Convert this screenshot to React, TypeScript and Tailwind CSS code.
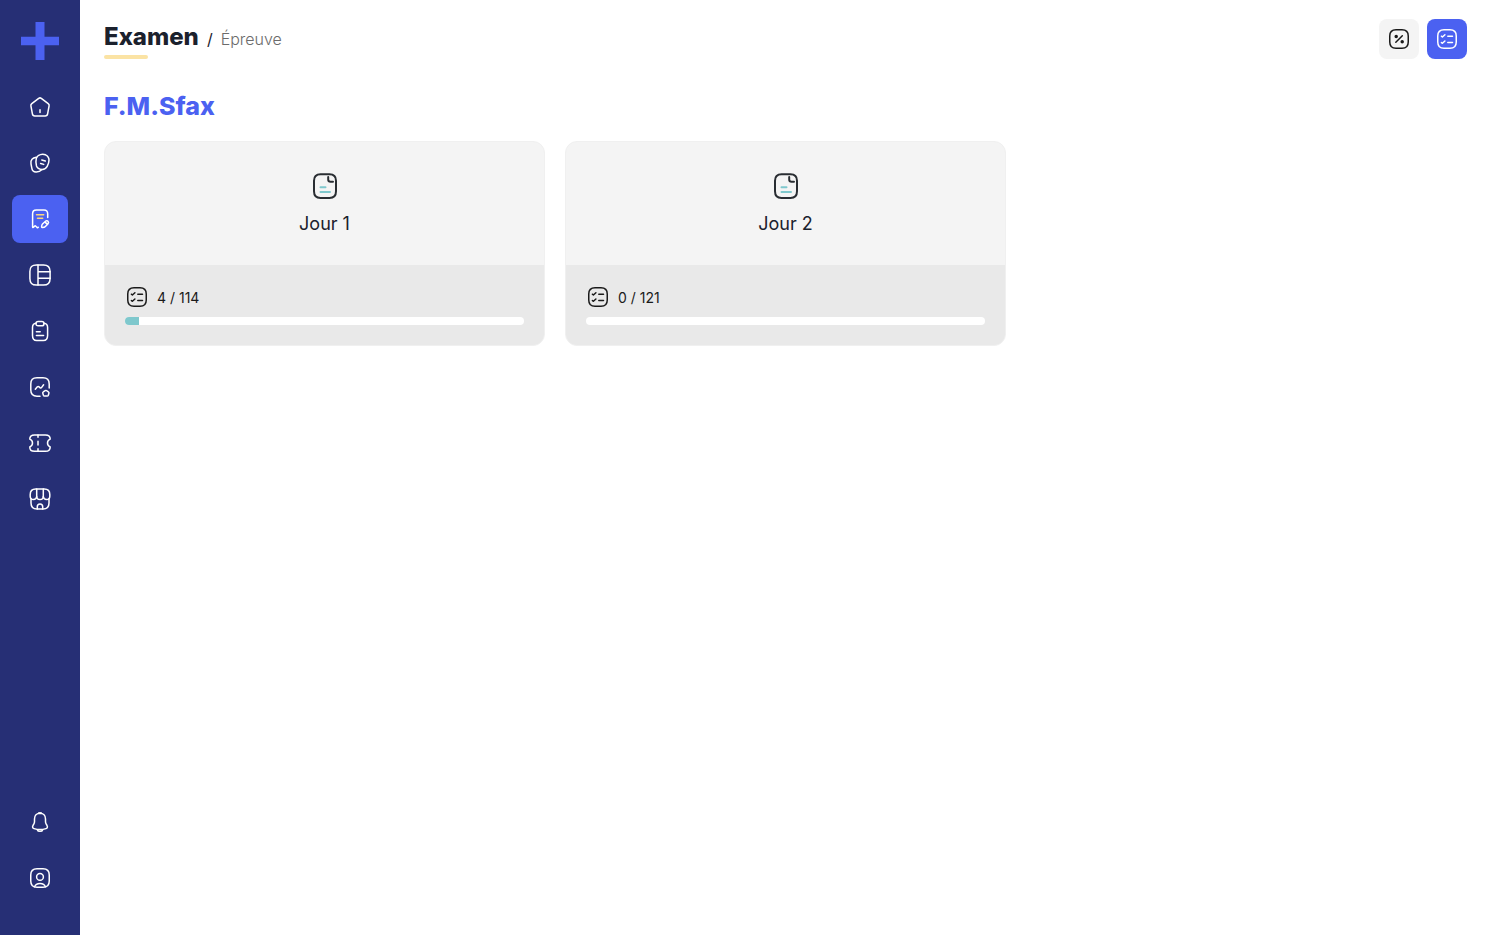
import { useState } from "react";
import type { ReactNode } from "react";

interface IconProps {
  children: ReactNode;
  className?: string;
}

interface NavItem {
  label: string;
  icon: ReactNode;
}

interface Exam {
  name: string;
  done: number;
  total: number;
}

const Icon = ({ children, className = "size-6" }: IconProps) => (
  <svg
    viewBox="0 0 24 24"
    fill="none"
    stroke="currentColor"
    strokeWidth="1.5"
    strokeLinecap="round"
    strokeLinejoin="round"
    className={className}
    aria-hidden="true"
  >
    {children}
  </svg>
);

const ChecklistIcon = () => (
  <Icon>
    <path d="M9 2.750h6c4.400 0 6.250 1.850 6.250 6.250v6c0 4.400-1.850 6.250-6.250 6.250H9c-4.400 0-6.250-1.850-6.250-6.250V9C2.750 4.600 4.600 2.750 9 2.750Z" />
    <path d="m6.400 9.200 1 .8L9.900 7.700M6.400 15.500l1 .8 2.500-2.300M12.800 9.300h4.700M12.800 15.500h4.700" />
  </Icon>
);

const PercentIcon = () => (
  <Icon>
    <path d="M9 2.750h6c4.400 0 6.250 1.850 6.250 6.250v6c0 4.400-1.850 6.250-6.250 6.250H9c-4.400 0-6.250-1.850-6.250-6.250V9C2.750 4.600 4.600 2.750 9 2.750Z" />
    <path d="M8.800 15.300 15.300 8.800" />
    <circle cx="9.200" cy="9.400" r="1" fill="currentColor" />
    <circle cx="15.200" cy="14.700" r="1" fill="currentColor" />
  </Icon>
);

const DocumentIcon = () => (
  <svg
    viewBox="0 0 32 32"
    fill="none"
    strokeWidth="2"
    strokeLinecap="round"
    className="size-8 text-[#292d32]"
    aria-hidden="true"
  >
    <path
      stroke="currentColor"
      d="M11.500 4.200h9c4.800 0 6.500 2.200 6.500 6.500v10.600c0 4.600-1.700 6.700-6.500 6.700h-9C6.700 28 5 25.900 5 21.300V10.700c0-4.300 1.700-6.500 6.500-6.500Z"
    />
    <path stroke="currentColor" d="M19.200 7v2.500c0 1.400 1.100 2.300 2.400 2.300h2.400" />
    <path stroke="#7fc8cd" d="M11.500 17.200h5M11.500 22h9.500" />
  </svg>
);

const navItems: NavItem[] = [
  {
    label: "Accueil",
    icon: (
      <Icon>
        <path d="M10.700 3.300 3.800 8.600c-.8.6-1.100 1.300-.9 2.300l1.500 8c.2 1.400 1 2.100 2.400 2.100h10.400c1.400 0 2.200-.7 2.400-2.100l1.500-8c.2-1-.1-1.700-.9-2.300l-6.900-5.300c-.9-.6-1.700-.6-2.600 0Z" />
        <path d="M12 14.800v2.600" />
      </Icon>
    ),
  },
  {
    label: "Cours",
    icon: (
      <Icon>
        <path d="M12.300 3.600c1.700-.6 3.500-.6 5.200.2 2.200 1.100 3.500 2.400 3.500 5.200 0 2-.7 4.500-1.800 6.400-1.200 2.100-2.800 3.300-5.300 3.100-2.600-.2-4.500-.8-5.400-3.500C7.900 12.900 7.700 10 8.300 7.400c.5-2 1.800-3.100 4-3.800Z" />
        <path d="M8.200 6.300c-1.600.3-3 .7-4.200 1.900-1.200 1.300-1.300 2.900-1 4.600l.8 4.300c.4 2.500 1.700 3.800 4.200 4 2.400.1 4.300-.7 6-2.500M13.800 9l3.500 1M12.600 12.500l3.100.9" />
      </Icon>
    ),
  },
  {
    label: "Examen",
    icon: (
      <Icon>
        <path d="M19.700 10.500V6.700c0-2.500-1.200-3.700-3.700-3.700H8.300C5.800 3 4.600 4.200 4.600 6.700v13.200c0 .6.500.8.900.4l1-1.100c.4-.4.900-.4 1.300 0l1.100 1.100c.5.400 1 .4 1.400 0" />
        <path d="m17.500 14.200-3 2.800c-.6.600-.8 1.600-.9 2.700 0 .6.300.9.900.9 1.100-.1 2-.2 2.600-.8l2.800-2.900c1.700-1.700-.7-4.300-2.400-2.700ZM16.900 14.900l2.200 2.200" />
        <path stroke="#fbd77c" d="M8.500 7.700h7.200M9.500 11.200h5.200" />
      </Icon>
    ),
  },
  {
    label: "Tableau",
    icon: (
      <Icon>
        <path d="M8.500 1.900h7c4.700 0 6.600 1.900 6.600 6.600v7c0 4.700-1.900 6.600-6.600 6.600h-7c-4.700 0-6.600-1.900-6.600-6.600v-7c0-4.700 1.900-6.600 6.600-6.600Z" />
        <path d="M10 2v20M10 8.700h12M10 15.300h12" />
      </Icon>
    ),
  },
  {
    label: "Fiches",
    icon: (
      <Icon>
        <path d="M16 4.300c2.500.2 3.600 1.300 3.600 4.200v8c0 3.300-.9 5-4.300 5H8.700c-3.400 0-4.200-1.700-4.200-5v-8c0-2.900 1.100-4 3.500-4.200" />
        <path d="M10.200 2.600h3.600c1.500 0 2.200.7 2.200 2.100s-.7 2.100-2.200 2.100h-3.600C8.700 6.800 8 6.100 8 4.700s.7-2.100 2.200-2.100ZM8.400 12.700h3.800M8.400 16.400h7.200" />
      </Icon>
    ),
  },
  {
    label: "Statistiques",
    icon: (
      <Icon>
        <path d="M21.200 13V9c0-4.500-1.800-6.200-6.200-6.200H9C4.600 2.800 2.800 4.500 2.800 9v6c0 4.500 1.800 6.200 6.200 6.200h3" />
        <path d="m7.300 14.300 2.100-2.500c.4-.4.900-.5 1.300-.2l1.500 1.200c.4.3 1 .2 1.300-.2l2.100-2.800" />
        <path d="m17.100 15.700-1.800 1.200c-.5.300-.7.700-.5 1.300l.6 2c.2.600.5.900 1.100.9h2.700c.6 0 .9-.3 1.100-.9l.6-2c.2-.6 0-1-.5-1.300l-1.800-1.200c-.5-.4-1-.4-1.500 0Z" />
      </Icon>
    ),
  },
  {
    label: "Abonnement",
    icon: (
      <Icon>
        <path d="M6.500 4h11c3.300 0 4.700 1 4.700 4.100-1.700.7-2.700 2.200-2.700 3.900s1 3.200 2.700 3.900c0 3.300-1.400 4.400-4.700 4.400h-11c-3.300 0-4.700-1.100-4.700-4.400C3.500 15.200 4.500 13.700 4.500 12s-1-3.200-2.700-3.900C1.800 5 3.200 4 6.500 4Z" />
        <path d="M10 4v2.200M10 10.300v3.600M10 17.800V20" />
      </Icon>
    ),
  },
  {
    label: "Boutique",
    icon: (
      <Icon>
        <path d="M3 11.800V16c0 4.200 1.800 6 6 6h6c4.200 0 6-1.800 6-6v-4.200" />
        <path d="M8.700 2v7.300c0 2 1.300 3.300 3.300 3.300s3.300-1.300 3.300-3.300V2" />
        <path d="M8.700 9.500c-.2 1.900-1.500 3.100-3.300 3.100-2 0-3.200-1.300-3.200-3.300V7.500C2.200 3.700 3.900 2 7.700 2h8.600c3.800 0 5.500 1.700 5.500 5.500v1.800c0 2-1.200 3.300-3.200 3.300-1.800 0-3.100-1.200-3.300-3.100" />
        <path d="M9.300 22v-2.200c0-1.900.8-2.800 2.700-2.800s2.700.9 2.700 2.800V22" />
      </Icon>
    ),
  },
];

const footerItems: NavItem[] = [
  {
    label: "Notifications",
    icon: (
      <Icon>
        <path d="M12 3.300c-3.300 0-5.500 2.300-5.500 5.600v2.700c0 .7-.2 1.500-.5 2.100l-1.100 2c-.7 1.200-.2 2.500 1.100 2.900 3.900 1.300 8.100 1.300 12 0 1.300-.4 1.800-1.700 1.100-2.900l-1.100-2c-.3-.6-.5-1.400-.5-2.100V8.900c0-3.300-2.200-5.600-5.500-5.600Z" />
        <path d="M10.700 2.900c.9-.3 1.700-.3 2.600 0M9.300 19.700c.6 2.200 4.800 2.200 5.400 0" />
      </Icon>
    ),
  },
  {
    label: "Profil",
    icon: (
      <Icon>
        <path d="M9 2.750h6c4.400 0 6.250 1.850 6.250 6.250v6c0 4.400-1.850 6.250-6.250 6.250H9c-4.400 0-6.250-1.850-6.250-6.250V9C2.750 4.600 4.600 2.750 9 2.750Z" />
        <circle cx="12" cy="10.900" r="3.400" />
        <path d="M6.600 20.800c.7-2.200 2.800-3.400 5.400-3.400s4.700 1.200 5.400 3.400" />
      </Icon>
    ),
  },
];

const exams: Exam[] = [
  { name: "Jour 1", done: 4, total: 114 },
  { name: "Jour 2", done: 0, total: 121 },
];

const NavLink = ({ item, active }: { item: NavItem; active?: boolean }) => (
  <a
    href="#"
    aria-label={item.label}
    className={`flex h-12 w-14 items-center justify-center rounded-lg text-white ${
      active ? "bg-[#4b61f1]" : ""
    }`}
  >
    {item.icon}
  </a>
);

const ExamCard = ({ exam }: { exam: Exam }) => (
  <a
    href="#"
    className="block overflow-hidden rounded-xl border border-[#f0f0f0] bg-[#f4f4f4]"
  >
    <div className="flex flex-col items-center gap-2 py-7">
      <DocumentIcon />
      <h3 className="text-[18px] leading-[27px] text-[#1b212d]">{exam.name}</h3>
    </div>
    <div className="flex flex-col gap-2 bg-[#e9e9e9] p-5">
      <div className="flex items-center gap-2 text-[#1a1a1a]">
        <ChecklistIcon />
        <span className="text-sm leading-[21px]">
          {exam.done} / {exam.total}
        </span>
      </div>
      <div className="h-2 overflow-hidden rounded-full bg-white">
        <div
          className="h-full bg-[#7fc8cd]"
          style={{ width: `${(exam.done / exam.total) * 100}%` }}
        ></div>
      </div>
    </div>
  </a>
);

export default function App() {
  const [mode, setMode] = useState("count");

  return (
    <div className="flex min-h-screen bg-white font-[Inter,sans-serif]">
      <aside className="flex w-20 shrink-0 flex-col items-center bg-[#262f75] pt-[22px] pb-[33px]">
        <a href="#" aria-label="Plus">
          <svg viewBox="0 0 38 38" className="size-[38px]" aria-hidden="true">
            <path
              fill="#4b61f1"
              d="M14.500 0h9v14.800H38v8.400H23.500V38h-9V23.200H0v-8.400h14.500Z"
            />
          </svg>
        </a>
        <nav className="mt-[23px] flex flex-1 flex-col gap-2">
          {navItems.map((item) => (
            <NavLink
              key={item.label}
              item={item}
              active={item.label === "Examen"}
            />
          ))}
        </nav>
        <div className="flex flex-col gap-2">
          {footerItems.map((item) => (
            <NavLink key={item.label} item={item} />
          ))}
        </div>
      </aside>

      <main className="flex-1 pt-[19px] pr-[18px] pl-6">
        <header className="flex items-start justify-between">
          <div>
            <div className="flex items-baseline gap-2">
              <h1 className="text-2xl leading-9 font-extrabold text-[#1b212d]">
                Examen
              </h1>
              <span className="text-[#1b212d]">/</span>
              <span className="font-light text-[#6b6b6b]">Épreuve</span>
            </div>
            <div className="h-1 w-11 rounded-full bg-[#fbe3a4]"></div>
          </div>
          <div className="flex gap-2">
            <button
              type="button"
              aria-label="Pourcentage"
              onClick={() => setMode("percent")}
              className={`flex size-10 items-center justify-center rounded-lg ${
                mode === "percent"
                  ? "bg-[#4b61f1] text-white"
                  : "bg-[#f4f4f4] text-[#1a1a1a]"
              }`}
            >
              <PercentIcon />
            </button>
            <button
              type="button"
              aria-label="Questions"
              onClick={() => setMode("count")}
              className={`flex size-10 items-center justify-center rounded-lg ${
                mode === "count"
                  ? "bg-[#4b61f1] text-white"
                  : "bg-[#f4f4f4] text-[#1a1a1a]"
              }`}
            >
              <ChecklistIcon />
            </button>
          </div>
        </header>

        <h2 className="mt-7 mb-4 text-[25px] leading-[38px] font-extrabold text-[#4b61f1]">
          F.M.Sfax
        </h2>
        <div className="grid grid-cols-3 gap-5">
          {exams.map((exam) => (
            <ExamCard key={exam.name} exam={exam} />
          ))}
        </div>
      </main>
    </div>
  );
}
